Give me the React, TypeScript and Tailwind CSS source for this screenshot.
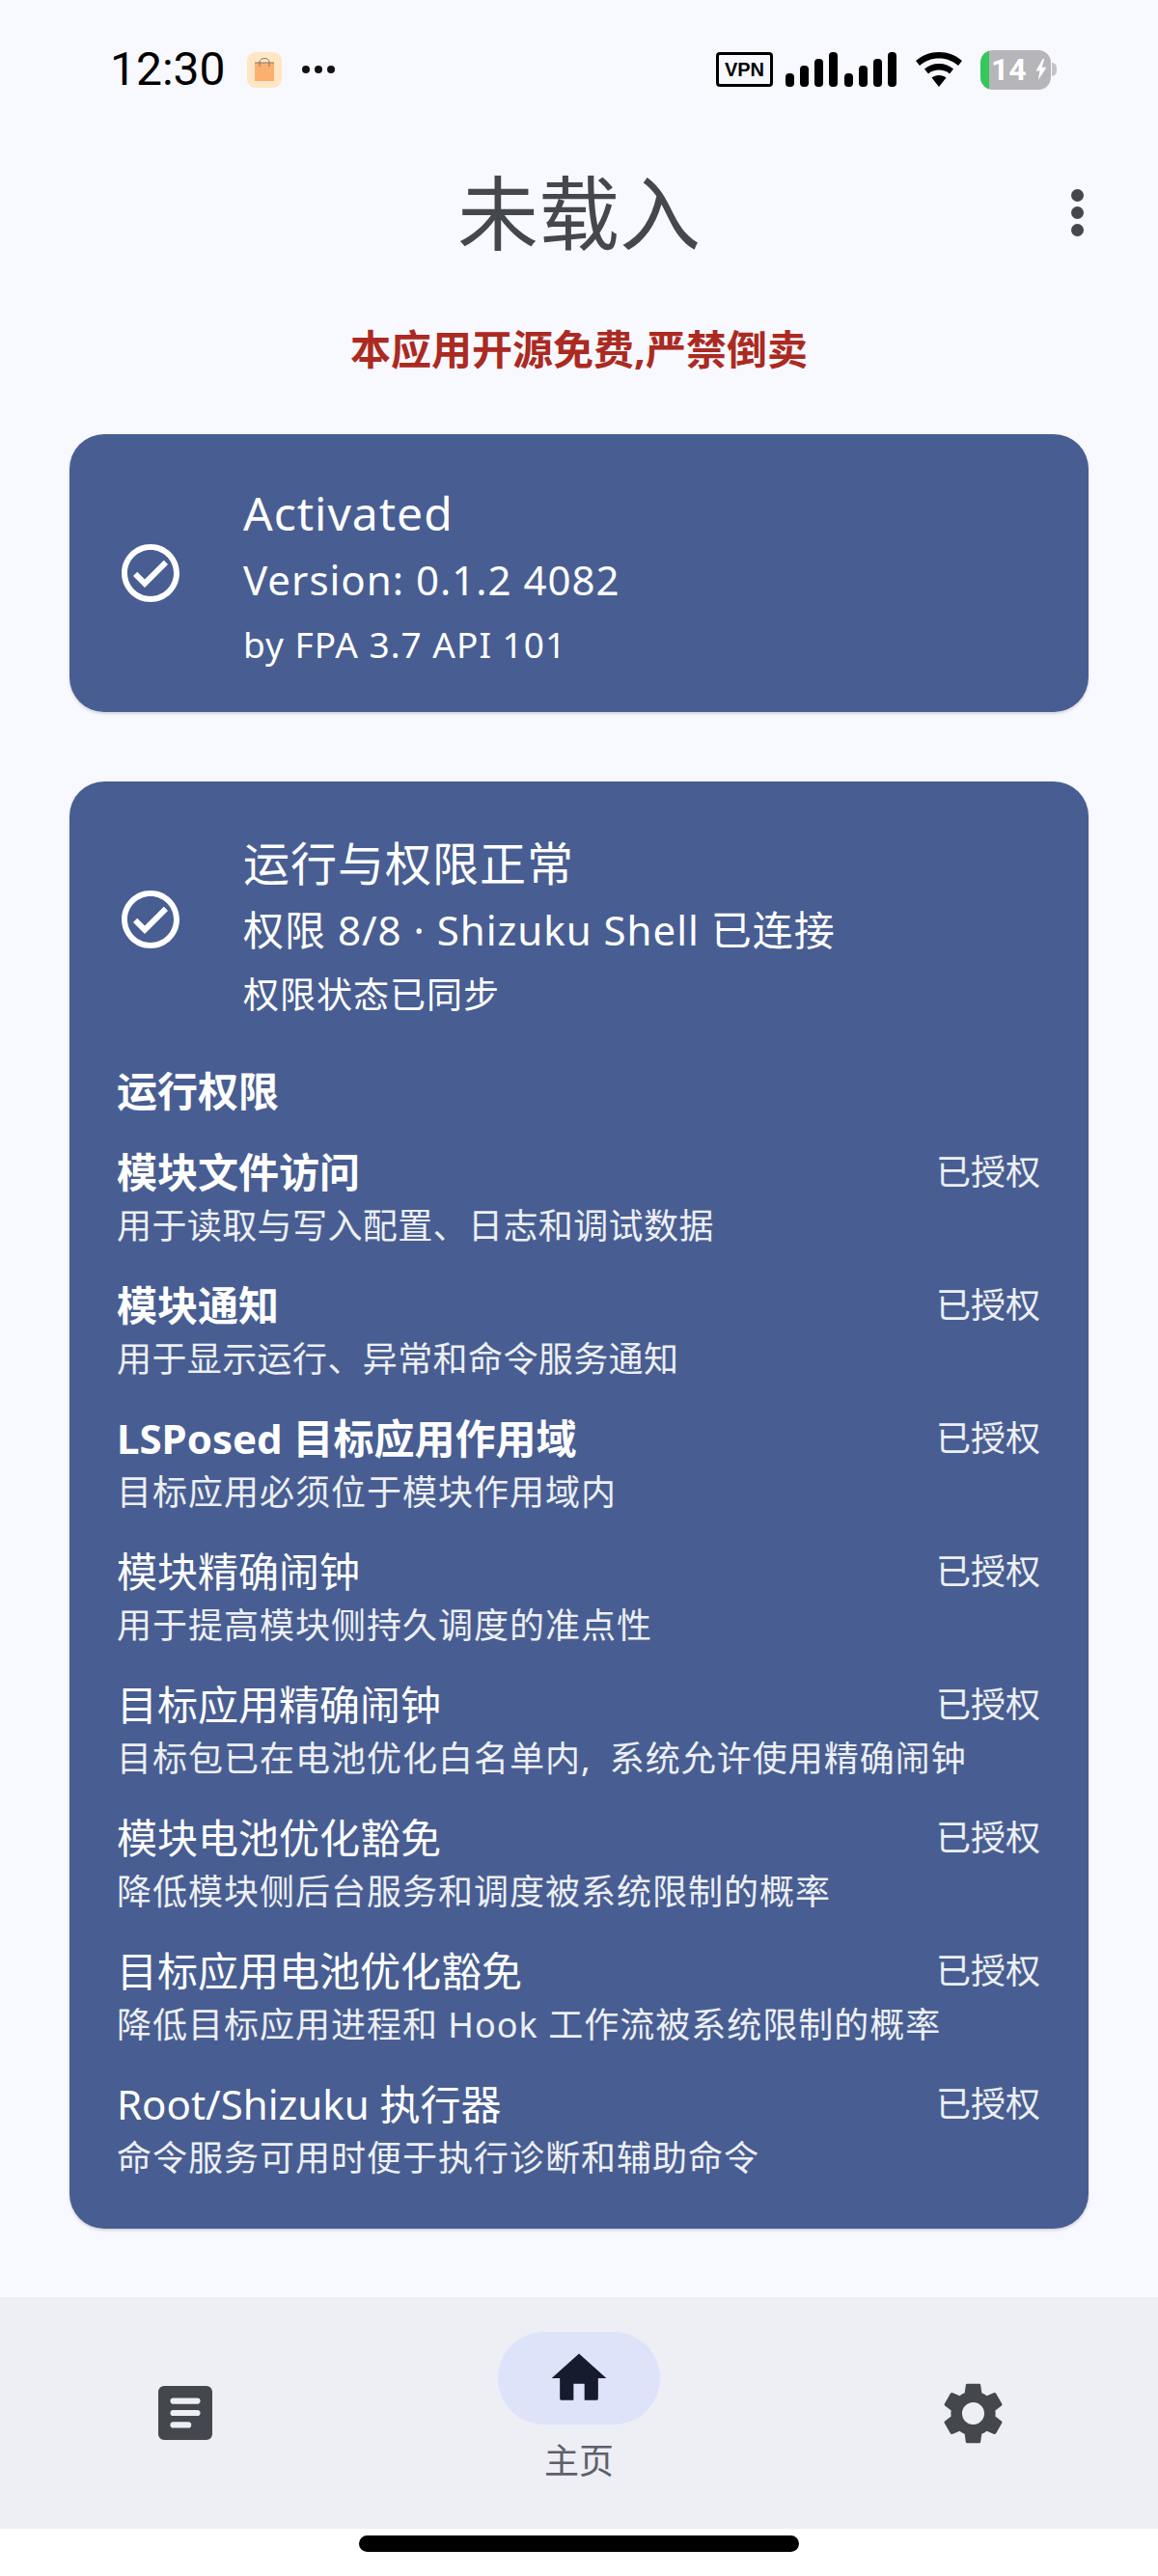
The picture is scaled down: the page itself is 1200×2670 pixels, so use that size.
// App.tsx
const FONT = "font-['Noto_Sans','Noto_Sans_CJK_SC',sans-serif]";

const PERMISSIONS = [
  { title: "模块文件访问", desc: "用于读取与写入配置、日志和调试数据", bold: true, spacing: "tracking-[0.4px]" },
  { title: "模块通知", desc: "用于显示运行、异常和命令服务通知", bold: true, spacing: "tracking-[0.4px]" },
  { title: "LSPosed 目标应用作用域", desc: "目标应用必须位于模块作用域内", bold: true, spacing: "tracking-[1px]" },
  { title: "模块精确闹钟", desc: "用于提高模块侧持久调度的准点性", bold: false, spacing: "tracking-[1px]" },
  { title: "目标应用精确闹钟", desc: "目标包已在电池优化白名单内,\u2002系统允许使用精确闹钟", bold: false, spacing: "tracking-[1px]" },
  { title: "模块电池优化豁免", desc: "降低模块侧后台服务和调度被系统限制的概率", bold: false, spacing: "tracking-[1px]" },
  { title: "目标应用电池优化豁免", desc: "降低目标应用进程和 Hook 工作流被系统限制的概率", bold: false, spacing: "tracking-[1px]" },
  { title: "Root/Shizuku 执行器", desc: "命令服务可用时便于执行诊断和辅助命令", bold: false, spacing: "tracking-[1px]" },
];

function CheckCircle() {
  return (
    <svg viewBox="0 0 24 24" className="w-[72px] h-[72px] shrink-0 fill-white">
      <path d="M12 2C6.48 2 2 6.48 2 12s4.48 10 10 10 10-4.48 10-10S17.52 2 12 2zm0 18c-4.41 0-8-3.59-8-8s3.59-8 8-8 8 3.59 8 8-3.59 8-8 8zm4.59-12.42L10 14.17l-2.59-2.58L6 13l4 4 8-8z" />
    </svg>
  );
}

function StatusBar() {
  return (
    <div className="flex items-center justify-between h-[60px] mt-[42px] pl-[114px] pr-[105px]">
      <div className="flex items-center">
        <span className="font-['Roboto',sans-serif] text-[48px] leading-none font-normal text-black">12:30</span>
        <div className="ml-[22px] w-[36px] h-[37px] rounded-[9px] bg-[#ffe6c4] flex items-center justify-center">
          <svg viewBox="0 0 20 24" className="w-[20px] h-[24px]">
            <rect x="0" y="5" width="20" height="19" fill="#fbb070" />
            <path d="M5 9V4a5 3.5 0 0 1 10 0v5M0 5h20" fill="none" stroke="#8a7565" strokeWidth="1" />
          </svg>
        </div>
        <div className="ml-[21px] flex gap-[5px]">
          <span className="w-[8px] h-[8px] rounded-full bg-[#111]" />
          <span className="w-[8px] h-[8px] rounded-full bg-[#111]" />
          <span className="w-[8px] h-[8px] rounded-full bg-[#111]" />
        </div>
      </div>
      <div className="flex items-center">
        <div className="w-[59px] h-[36px] rounded-[4px] border-[3px] border-black flex items-center justify-center font-['Liberation_Sans',sans-serif] font-bold text-[20px] leading-none text-black">
          VPN
        </div>
        <svg viewBox="0 0 116 36" className="ml-[13px] w-[116px] h-[36px] fill-black">
          <rect x="0" y="22" width="9" height="14" rx="4" />
          <rect x="15" y="14" width="9" height="22" rx="4" />
          <rect x="30" y="7" width="9" height="29" rx="4" />
          <rect x="45" y="0" width="9" height="36" rx="4" />
          <rect x="61" y="22" width="9" height="14" rx="4" />
          <rect x="76" y="14" width="9" height="22" rx="4" />
          <rect x="91" y="7" width="9" height="29" rx="4" />
          <rect x="106" y="0" width="9" height="36" rx="4" />
        </svg>
        <svg viewBox="0 0 48 36" className="ml-[19px] w-[48px] h-[36px] fill-black">
          <path d="M24 0C15 0 7 3 0 9l4 5c6-5 12-7.500 20-7.500S38 9 44 14l4-5C41 3 33 0 24 0z" />
          <path d="M24 12c-6 0-11 2-15 5.500l4 5c3-3 7-4 11-4s8 1 11 4l4-5C35 14 30 12 24 12z" />
          <path d="M24 24c-3 0-5.500 1-7.500 2.500L24 36l7.500-9.500C29.500 25 27 24 24 24z" />
        </svg>
        <div className="ml-[19px] relative w-[73px] h-[41px] rounded-[13px] bg-[#b5b5ba] overflow-hidden flex items-center pl-[11px] gap-[9px]">
          <span className="absolute left-0 top-0 bottom-0 w-[9px] bg-[#34c759]" />
          <span className="font-['Roboto',sans-serif] font-bold text-[32px] leading-none text-white">14</span>
          <svg viewBox="0 0 14 28" className="w-[12px] h-[22px] fill-white">
            <path d="M9 0L0 16h5l-2 12 11-17H8l3-11z" />
          </svg>
        </div>
        <span className="ml-[1px] w-[5px] h-[14px] rounded-r-full bg-[#c4c4c8]" />
      </div>
    </div>
  );
}

function TopBar() {
  return (
    <div className="relative flex justify-center mt-[67px] h-[104px] items-center">
      <span className="text-[84px] leading-none text-[#44474e]">未载入</span>
      <div className="absolute right-[77px] top-[27px] flex flex-col gap-[5px]">
        <span className="w-[13px] h-[13px] rounded-full bg-[#44474e]" />
        <span className="w-[13px] h-[13px] rounded-full bg-[#44474e]" />
        <span className="w-[13px] h-[13px] rounded-full bg-[#44474e]" />
      </div>
    </div>
  );
}

function CardText({ lines, top }: { lines: [string, string, string]; top: string }) {
  return (
    <div className={`ml-[60px] ${top}`}>
      <div className="text-[48px] leading-[66px] tracking-[1px]">{lines[0]}</div>
      <div className="text-[42px] leading-[72px] tracking-[1px]">{lines[1]}</div>
      <div className="text-[37px] leading-[62px] tracking-[1px]">{lines[2]}</div>
    </div>
  );
}

function PermissionRow({ title, desc, bold, spacing }: { title: string; desc: string; bold: boolean; spacing: string }) {
  return (
    <div className="flex justify-between h-[138px] pt-[2px]">
      <div className="text-white whitespace-nowrap w-0 flex-1">
        <div className={`text-[42px] leading-[56px] ${bold ? "font-bold" : "font-normal"}`}>{title}</div>
        <div className={`text-[36px] leading-[56px] text-white/90 ${spacing}`}>{desc}</div>
      </div>
      <div className="shrink-0 text-[36px] leading-[56px] text-white/90 whitespace-nowrap">已授权</div>
    </div>
  );
}

function NavBar() {
  return (
    <div className="h-[240px] bg-[#eeeef5] grid grid-cols-3">
      <div className="flex items-center justify-center pr-[16px]">
        <svg viewBox="3 3 18 18" className="w-[56px] h-[56px] fill-[#44474e]">
          <path d="M19 3H5c-1.100 0-2 .9-2 2v14c0 1.100.9 2 2 2h14c1.100 0 2-.9 2-2V5c0-1.100-.9-2-2-2zM8 7h8a1 1 0 0 1 0 2H8a1 1 0 0 1 0-2zm0 4h8a1 1 0 0 1 0 2H8a1 1 0 0 1 0-2zm0 4h5a1 1 0 0 1 0 2H8a1 1 0 0 1 0-2z" />
        </svg>
      </div>
      <div className="flex flex-col items-center pt-[36px]">
        <div className="w-[168px] h-[96px] rounded-full bg-[#dde3f9] flex items-center justify-center">
          <svg viewBox="0 0 24 24" className="w-[68px] h-[68px] fill-[#161b2e]">
            <path d="M10 20v-6h4v6h4.500a.5.5 0 0 0 .5-.5V12h3L12 3 2 12h3v7.500a.5.5 0 0 0 .5.5z" />
          </svg>
        </div>
        <span className="mt-[20px] text-[36px] leading-none text-[#5d606b]">主页</span>
      </div>
      <div className="flex items-center justify-center pl-[16px]">
        <svg viewBox="0 0 24 24" className="w-[77px] h-[77px] fill-[#44474e]">
          <path d="M19.140 12.940c.04-.3.06-.61.06-.94 0-.32-.02-.64-.07-.94l2.030-1.580a.49.49 0 0 0 .12-.61l-1.920-3.320a.488.488 0 0 0-.59-.22l-2.390.96c-.5-.38-1.030-.7-1.620-.94l-.36-2.540a.484.484 0 0 0-.48-.41h-3.840c-.24 0-.43.17-.47.41l-.36 2.540c-.59.24-1.130.57-1.620.94l-2.390-.96c-.22-.08-.47 0-.59.22L2.740 8.870c-.12.21-.08.47.12.61l2.030 1.580c-.05.3-.09.63-.09.94s.02.64.07.94l-2.030 1.580a.49.49 0 0 0-.12.61l1.920 3.320c.12.22.37.29.59.22l2.390-.96c.5.38 1.030.7 1.620.94l.36 2.540c.05.24.24.41.48.41h3.840c.24 0 .44-.17.47-.41l.36-2.540c.59-.24 1.130-.56 1.620-.94l2.390.96c.22.08.47 0 .59-.22l1.920-3.320c.12-.22.07-.47-.12-.61l-2.010-1.580zM12 15.600c-1.980 0-3.600-1.620-3.600-3.600s1.620-3.600 3.600-3.600 3.600 1.620 3.600 3.600-1.620 3.600-3.600 3.600z" />
        </svg>
      </div>
    </div>
  );
}

export default function App() {
  return (
    <div className={`w-[1200px] h-[2670px] bg-[#f8f8ff] flex flex-col overflow-hidden ${FONT}`}>
      <StatusBar />
      <TopBar />

      <div className="mt-[61px] text-center text-[42px] leading-[56px] font-bold text-[#ab2a21]">
        本应用开源免费,严禁倒卖
      </div>

      {/* Activated */}
      <div className="mx-[72px] mt-[60px] h-[288px] shrink-0 rounded-[36px] bg-[#485e92] shadow-[0_2px_3px_rgba(0,0,0,0.15)] flex items-center pl-[48px] text-white">
        <CheckCircle />
        <CardText top="pt-[10px]" lines={["Activated", "Version: 0.1.2 4082", "by FPA 3.7 API 101"]} />
      </div>

      {/* Permissions */}
      <div className="mx-[72px] mt-[72px] h-[1500px] shrink-0 rounded-[36px] bg-[#485e92] shadow-[0_2px_3px_rgba(0,0,0,0.15)] text-white">
        <div className="flex items-center h-[286px] pl-[48px]">
          <CheckCircle />
          <CardText top="pt-[18px]" lines={["运行与权限正常", "权限 8/8 · Shizuku Shell 已连接", "权限状态已同步"]} />
        </div>
        <div className="pl-[49px] pr-[50px] pt-[7px]">
          <div className="text-[42px] leading-[56px] font-bold mb-[26px]">运行权限</div>
          {PERMISSIONS.map((p) => (
            <PermissionRow key={p.title} title={p.title} desc={p.desc} bold={p.bold} spacing={p.spacing} />
          ))}
        </div>
      </div>

      <div className="mt-[71px]">
        <NavBar />
      </div>
      <div className="flex-1 bg-white flex justify-center pt-[7px]">
        <div className="w-[456px] h-[17px] rounded-full bg-black" />
      </div>
    </div>
  );
}
